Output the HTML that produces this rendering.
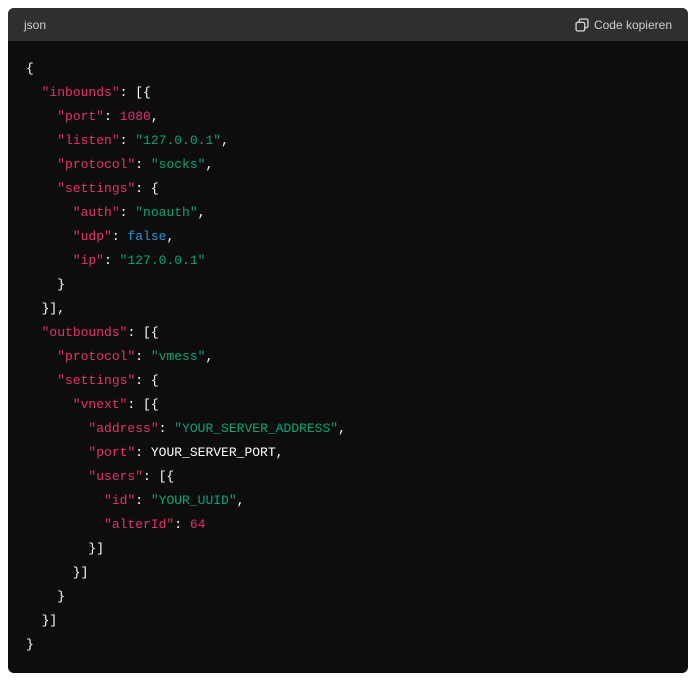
<!DOCTYPE html>
<html><head><style>
body{margin:0;background:#fff;width:697px;height:685px;}
.box{position:absolute;left:8px;top:8px;width:680px;height:665px;background:#0d0d0d;border-radius:6px;overflow:hidden;}
.hd{height:33px;background:#2f2f2f;color:#cdcdcd;font:12px "Liberation Sans",sans-serif;display:flex;align-items:center;justify-content:space-between;padding:0 16px;}
.cp{display:flex;align-items:center;gap:5px;}
pre{margin:0;padding:16px 0 0 18px;font:13px/24px "Liberation Mono",monospace;color:#fff;}
.k{color:#e9316a}.s{color:#00a67d}.n{color:#df3079}.b{color:#2e95d3}
</style></head><body><div class="box">
<div class="hd"><span>json</span><span class="cp"><svg width="14" height="14" viewBox="0 0 13 13" fill="none" stroke="#cdcdcd" stroke-width="1.3"><rect x="1" y="4" width="8" height="8" rx="1.5"/><path d="M4 4V2.5A1.5 1.5 0 0 1 5.5 1H10.5A1.5 1.5 0 0 1 12 2.5V7.5A1.5 1.5 0 0 1 10.5 9H9"/></svg>Code kopieren</span></div>
<pre>{
  <span class="k">"inbounds"</span>: [{
    <span class="k">"port"</span>: <span class="n">1080</span>,
    <span class="k">"listen"</span>: <span class="s">"127.0.0.1"</span>,
    <span class="k">"protocol"</span>: <span class="s">"socks"</span>,
    <span class="k">"settings"</span>: {
      <span class="k">"auth"</span>: <span class="s">"noauth"</span>,
      <span class="k">"udp"</span>: <span class="b">false</span>,
      <span class="k">"ip"</span>: <span class="s">"127.0.0.1"</span>
    }
  }],
  <span class="k">"outbounds"</span>: [{
    <span class="k">"protocol"</span>: <span class="s">"vmess"</span>,
    <span class="k">"settings"</span>: {
      <span class="k">"vnext"</span>: [{
        <span class="k">"address"</span>: <span class="s">"YOUR_SERVER_ADDRESS"</span>,
        <span class="k">"port"</span>: YOUR_SERVER_PORT,
        <span class="k">"users"</span>: [{
          <span class="k">"id"</span>: <span class="s">"YOUR_UUID"</span>,
          <span class="k">"alterId"</span>: <span class="n">64</span>
        }]
      }]
    }
  }]
}</pre>
</div></body></html>
